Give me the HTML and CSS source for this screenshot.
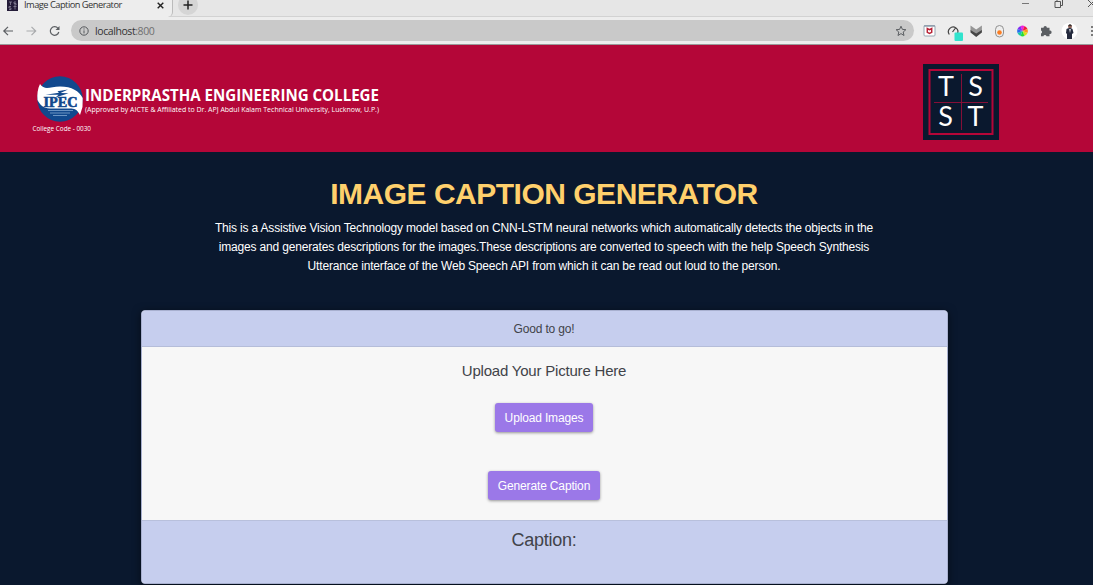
FILE: index.html
```
<!DOCTYPE html>
<html lang="en">
<head>
<meta charset="utf-8">
<title>Image Caption Generator</title>
<link rel="stylesheet" href="styles.css">
</head>
<body>
<header class="browser">
  <div class="tabs">
    <div class="tab">
      <svg class="favicon" width="11" height="11" viewBox="0 0 11 11"><rect width="11" height="11" fill="#241c38"/><path d="M2 2h3M3.500 2v3M9 2H7v1.500h2V5H7M4 6.500H2V8h2v1.500H2M6.500 6.500h3M8 6.500v3" fill="none" stroke="#8f8ba0" stroke-width=".8"/></svg>
      <span class="tab-title">Image Caption Generator</span>
      <svg class="close" width="7" height="7" viewBox="0 0 7 7"><path d="M.7.7l5.600 5.600M6.300.7L.7 6.300" stroke="#222" stroke-width="1.400"/></svg>
    </div>
    <span class="new-tab"><svg width="10" height="10" viewBox="0 0 10 10"><path d="M5 .5v9M.5 5h9" stroke="#222" stroke-width="1.500"/></svg></span>
    <svg class="window-buttons" width="74" height="17" viewBox="0 0 74 17" fill="none" stroke="#555"><path d="M3 3.500h7" stroke="#777"/><path d="M36 1.500h5.500V7.500H36zM38 1V-.5h5.500v6H42"/><path d="M69 0l7 7M76 0l-7 7"/></svg>
  </div>
  <div class="toolbar">
    <svg class="nav" width="66" height="26" viewBox="0 0 66 26" fill="none" stroke-width="1.200"><path d="M13 13H4M8 8.800L3.800 13 8 17.200" stroke="#5b5e62"/><path d="M26.500 13h9M31.500 8.800L35.700 13l-4.200 4.200" stroke="#a9abad"/><path d="M58 10.300A4.300 4.300 0 1 0 58.800 14" stroke="#5b5e62"/><path d="M59.500 8v4h-4z" fill="#5b5e62"/></svg>
    <div class="address">
      <svg width="10" height="10" viewBox="0 0 10 10" fill="none" stroke="#55585c"><circle cx="5" cy="5" r="4.200"/><path d="M5 4.400v3M5 2.400v1.100"/></svg>
      <span class="url">localhost<span class="port">:800</span></span>
      <svg class="star" width="12" height="12" viewBox="0 0 12 12"><path d="M6 1.200l1.400 3.200 3.500.3-2.700 2.300.8 3.500L6 8.600l-3 1.900.8-3.500L1.100 4.700l3.500-.3z" fill="none" stroke="#5b5e62"/></svg>
    </div>
    <svg class="extensions" width="179" height="26" viewBox="0 0 179 26">
      <rect x="10" y="7.500" width="11" height="10.500" rx="1" fill="#fff" stroke="#98a6b2"/><path d="M10 8h11" stroke="#8e9dab" stroke-width="1.500"/><path d="M13.300 10.500v3.800l2.200 1.200 2.200-1.200v-3.800l-2.200 1.200z" fill="none" stroke="#b92236" stroke-width="1.500"/>
      <path d="M35.300 16.500a4.700 4.700 0 1 1 8-.5M38.500 14l3-4" fill="none" stroke="#444" stroke-width="1.200"/><rect x="40.500" y="14.500" width="8.500" height="8.500" rx="1" fill="#31e3cd"/>
      <path d="M56.500 7.500l5.700 4 5.700-4v5l-5.700 5-5.700-5z" fill="#969696"/><path d="M56.500 12l5.700 3.500 5.700-3.500v2.500l-5.700 4.500-5.700-4.500z" fill="#454545"/>
      <rect x="81.500" y="7.500" width="8" height="11.500" rx="4" fill="#eee" stroke="#909090"/><circle cx="85.500" cy="14.500" r="2.300" fill="#fb7d22"/>
      <g transform="translate(108.500 13)"><path d="M0 0L-2-5A5.400 5.400 0 0 1 2-5z" fill="#ee23dc"/><path d="M0 0L2-5A5.400 5.400 0 0 1 5-2z" fill="#f21b42"/><path d="M0 0L5-2A5.400 5.400 0 0 1 5 2z" fill="#ff951c"/><path d="M0 0L5 2A5.400 5.400 0 0 1 2 5z" fill="#d7e01c"/><path d="M0 0L2 5A5.400 5.400 0 0 1-2 5z" fill="#25dc35"/><path d="M0 0L-2 5A5.400 5.400 0 0 1-5 2z" fill="#18c8a8"/><path d="M0 0L-5 2A5.400 5.400 0 0 1-5-2z" fill="#286eee"/><path d="M0 0L-5-2A5.400 5.400 0 0 1-2-5z" fill="#842bef"/></g>
      <path d="M127 9.800h2.500a1.700 1.700 0 1 1 3.400 0h2.600v2.800a1.700 1.700 0 1 1 0 3.300v2.300h-3a1.600 1.600 0 0 0-3.100 0H127v-2.800a1.600 1.600 0 0 0 0-3z" fill="#5b5e62"/>
      <circle cx="155.500" cy="13" r="8" fill="#fff"/><circle cx="156" cy="8.500" r="2" fill="#8a6057"/><path d="M154 7.800q2-3 4 0z" fill="#222"/><path d="M152.500 11q3.500-2 6 0l1 4-1.500 1v5h-5v-5l-1-1z" fill="#252b3e"/><path d="M155 11l1 4 1-4" fill="#cbd0d8"/>
      <g fill="#555"><circle cx="178" cy="9" r="1"/><circle cx="178" cy="13" r="1"/><circle cx="178" cy="17" r="1"/></g>
    </svg>
  </div>
</header>
<section class="banner">
  <svg class="college" width="360" height="64" viewBox="0 0 360 64">
    <circle cx="30" cy="27" r="22.700" fill="#11488d"/>
    <path d="M10 12C15 19 20 14.500 30 14.500C42 14.500 49 19 52.700 26L52.500 35L50 43C47 37 44 36.500 40 36.500H20C13 36 10 33 7.500 28C7 22 7.500 17 10 12Z" fill="#fff"/>
    <path d="M15.500 22.800l13.500-2-1.500-1.500L38 17.500l-7.500 3.500 8 .3-13 4.200 3-2.700z" fill="#11488d"/>
    <text class="ipec" x="13.500" y="34.500" textLength="34" lengthAdjust="spacingAndGlyphs">IPEC</text>
    <path d="M18 38.500h25M20 41h20M23 43.500h14" stroke="#83a8d1" stroke-width=".8"/>
    <text class="college-name" x="55" y="29" textLength="294" lengthAdjust="spacingAndGlyphs">INDERPRASTHA ENGINEERING COLLEGE</text>
    <text class="small" x="55" y="40" textLength="294" lengthAdjust="spacingAndGlyphs">(Approved by AICTE &amp; Affiliated to Dr. APJ Abdul Kalam Technical University, Lucknow, U.P.)</text>
    <text class="small code" x="2.500" y="58.500" textLength="58.500" lengthAdjust="spacingAndGlyphs">College Code - 0030</text>
  </svg>
  <svg class="tsst" width="76" height="76" viewBox="0 0 76 76">
    <rect width="76" height="76" fill="#0a182e"/><rect x="6.500" y="6" width="63" height="64" fill="none" stroke="#b40638" stroke-width="2"/><path d="M38.500 10v56M11 38.500h54" stroke="#850f37"/>
    <g class="tsst-letters"><text x="23" y="32">T</text><text x="52.500" y="32">S</text><text x="22.500" y="61.500">S</text><text x="52.500" y="61.500">T</text></g>
  </svg>
</section>
<main>
  <h1>IMAGE CAPTION GENERATOR</h1>
  <p class="intro">This is a Assistive Vision Technology model based on CNN-LSTM neural networks which automatically detects the objects in the<br>images and generates descriptions for the images.These descriptions are converted to speech with the help Speech Synthesis<br>Utterance interface of the Web Speech API from which it can be read out loud to the person.</p>
  <section class="card">
    <div class="card-header">Good to go!</div>
    <div class="card-body">
      <h2>Upload Your Picture Here</h2>
      <button class="upload">Upload Images</button>
      <button class="generate">Generate Caption</button>
    </div>
    <div class="card-footer">Caption:</div>
  </section>
</main>
</body>
</html>
```
FILE: styles.css
```
* { box-sizing: border-box; }
body { margin: 0; height: 585px; overflow: hidden; background: #0a182e; font-family: "Liberation Sans", Arial, sans-serif; }
svg { display: block; flex: none; }
.browser { height: 45px; background: #ededed; border-bottom: 1px solid #999; }
.tabs { display: flex; height: 17px; background: #e6e6e6; border-bottom: 1px solid #d2d2d2; }
.tab { display: flex; width: 173px; height: 17px; padding-left: 7px; background: #ededed; border-right: 1px solid #bbb; border-bottom-right-radius: 5px; }
.tab-title { width: 139px; padding-left: 6px; font: 9.3px/10px "Open Sans", sans-serif; letter-spacing: -.52px; color: #333; white-space: nowrap; }
.close { margin-top: 2px; }
.new-tab { display: flex; align-items: center; justify-content: center; width: 20px; height: 20px; margin: -5px 0 0 5px; border-radius: 50%; background: #d5d5d5; }
.window-buttons { margin-left: auto; }
.toolbar { display: flex; align-items: center; height: 27px; }
.address { display: flex; flex: 1; align-items: center; height: 21px; margin-left: 5px; padding: 0 7px 0 8px; border-radius: 11px; background: #c9c9c9; }
.url { padding-left: 6px; font: 10.5px/20px "Open Sans", sans-serif; letter-spacing: -.42px; color: #333; }
.port { color: #707070; }
.star { margin-left: auto; }
.banner { display: flex; justify-content: space-between; height: 107px; padding: 19px 94px 0 30px; background: #b40638; }
.college { margin-top: 8px; }
.college text { fill: #fff; font-family: "Open Sans", sans-serif; }
.college .ipec { fill: #11488d; font: bold 14px "Liberation Serif", serif; stroke: #11488d; stroke-width: .6px; }
.college .college-name { font-size: 16.5px; font-weight: 700; }
.college .small { font-size: 8px; }
.college .code { font-size: 7px; }
.tsst-letters { fill: #fff; font: 27px Lato, sans-serif; text-anchor: middle; }
main { padding: 24px 5px 0 0; text-align: center; }
h1 { margin: 0; font-size: 30px; letter-spacing: -.5px; line-height: 36px; color: #ffd06c; }
.intro { margin: 7px 0 0; font-size: 12px; letter-spacing: -.175px; line-height: 19px; color: #fff; white-space: nowrap; }
.card { width: 807px; height: 274px; margin: 34px auto 0; border: 1px solid #a8b0cf; border-radius: 4px; background: #f7f7f7; overflow: hidden; box-shadow: 0 2px 8px #0008; color: #414349; }
.card-header { height: 36px; border-bottom: 1px solid #b5bdd9; background: #c6ceee; font-size: 12px; letter-spacing: -.15px; line-height: 36px; }
.card-body { display: flex; flex-direction: column; align-items: center; height: 173px; padding-top: 14px; }
h2 { margin: 0; font-size: 15px; letter-spacing: -.2px; font-weight: 400; line-height: 20px; }
button { height: 29px; padding: 0; border: 0; border-radius: 3px; background: #9b78e8; color: #fff; font: 12px "Liberation Sans", Arial, sans-serif; letter-spacing: -.15px; box-shadow: 0 1px 3px #0006; }
.upload { width: 98px; margin-top: 22px; }
.generate { width: 112px; margin-top: 39px; }
.card-footer { height: 64px; padding-top: 8px; border-top: 1px solid #b8c0dc; background: #c6ceee; font-size: 18px; letter-spacing: -.25px; line-height: 22px; }
```
